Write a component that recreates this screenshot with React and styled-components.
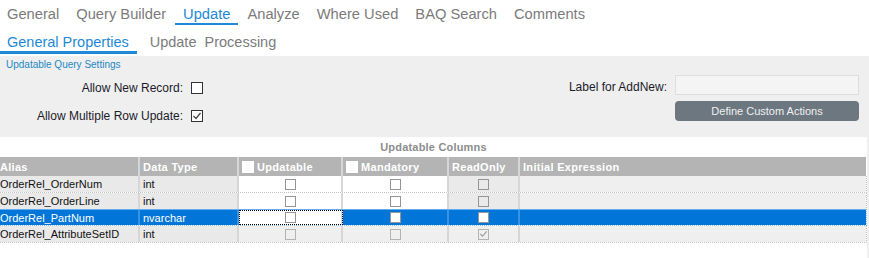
import React from 'react'
import styled, { createGlobalStyle, css } from 'styled-components'

const GlobalStyle = createGlobalStyle`
  body {
    margin: 0;
    background: #fff;
    font-family: "Liberation Sans", Arial, sans-serif;
  }
`

const Page = styled.div`
  width: 869px;
  height: 258px;
  overflow: hidden;
  background: #fff;
`

const TabBar = styled.div`
  display: flex;
  gap: 1px;
  height: 28px;
  box-sizing: border-box;
`

const Tab = styled.div`
  padding: 6px 8px 0;
  line-height: 17px;
  font-size: ${p => p.$thick ? 14.5 : 14.7}px;
  color: #7b7b7b;
  white-space: pre;
  border-bottom: ${p => p.$thick ? 3 : 2}px solid transparent;
  height: fit-content;

  &:first-child {
    padding-left: 7px;
  }

  ${p => p.$active && css`
    color: #1d89d8;
    border-bottom-color: #1d89d8;
  `}
`

const Body = styled.div`
  background: #efefef;
  height: 202px;
`

const Settings = styled.div`
  padding: 3px 10px 7px 0;
  height: 81px;
  box-sizing: border-box;
`

const SectionTitle = styled.div`
  font-size: 10px;
  line-height: 12px;
  color: #2389c4;
  padding-left: 6px;
`

const SettingsRow = styled.div`
  display: flex;
  justify-content: space-between;
`

const CheckForm = styled.div`
  display: grid;
  grid-template-columns: 183px 12px;
  grid-auto-rows: 28px;
  column-gap: 8px;
  align-items: center;
  margin-top: 3px;
`

const Label = styled.label`
  font-size: 12px;
  color: #1c1a2c;
  text-align: right;
  white-space: nowrap;
`

const Box = styled.span`
  display: inline-flex;
  align-items: center;
  justify-content: center;
  box-sizing: border-box;
  width: ${p => p.$size || 12}px;
  height: ${p => p.$size || 12}px;
  border: 1px solid ${p => p.$border || '#333'};
  background: ${p => p.$fill || 'transparent'};
`

const ActionForm = styled.div`
  display: grid;
  grid-template-columns: auto 184px;
  grid-template-rows: 20px 20px;
  column-gap: 8px;
  row-gap: 6px;
  margin-top: 4px;
`

const FieldLabel = styled(Label)`
  align-self: end;
  padding-bottom: 1px;
`

const TextInput = styled.div`
  box-sizing: border-box;
  border: 1px solid #dedede;
  background: #f4f4f4;
`

const ActionButton = styled.div`
  grid-column: 2;
  border-radius: 4px;
  background: #6c7780;
  color: #f0f0f0;
  font-size: 11px;
  display: flex;
  align-items: center;
  justify-content: center;
`

const GridPanel = styled.div`
  background: #fff;
  margin-right: 2px;
  height: 121px;
`

const GridTitle = styled.div`
  height: 20px;
  line-height: 20px;
  text-align: center;
  font-size: 11px;
  font-weight: bold;
  color: #8d8d8d;
  letter-spacing: 0.2px;
`

const COLS = '140px 99px 104px 106px 71px 1fr'

const HeadRow = styled.div`
  display: grid;
  grid-template-columns: ${COLS};
  height: 19px;
  background: #b4b4b4;
  width: 866px;
`

const HeadCell = styled.div`
  display: flex;
  align-items: center;
  gap: 3px;
  padding-left: ${p => p.$flush ? 0 : 3}px;
  border-right: 2px solid #d6d6d6;
  color: #fff;
  font-size: 11px;
  font-weight: bold;
  letter-spacing: 0.3px;
  white-space: nowrap;
  overflow: hidden;

  &:last-child {
    border-right: none;
  }
`

const DataRow = styled.div`
  display: grid;
  grid-template-columns: ${COLS};
  height: 17px;
  width: 867px;
  box-sizing: border-box;
  border-bottom: 1px dotted ${p => p.$selected ? '#8cc2ef' : '#c4c4c4'};
  border-right: 1px dotted ${p => p.$selected ? '#8cc2ef' : '#c4c4c4'};
  ${p => p.$selected && css`
    border-top: 1px solid #63aef0;
    margin-top: -1px;
  `}
`

const Cell = styled.div`
  display: flex;
  align-items: center;
  justify-content: ${p => p.$center ? 'center' : 'flex-start'};
  padding-left: ${p => p.$flush || p.$center ? 0 : 3}px;
  border-right: 2px solid #d6d6d6;
  font-size: 11px;
  color: #111;
  white-space: nowrap;
  overflow: hidden;
  background: ${p => p.$bg};
  box-sizing: border-box;

  &:last-child {
    border-right: none;
  }

  ${p => p.$selected && css`
    background: #0276d8;
    color: #fff;
    border-right-color: #3a93e0;
  `}

  ${p => p.$focused && css`
    background: #fff;
    outline: 1px dotted #000;
    outline-offset: -1px;
  `}
`

function Check({ color = '#444' }) {
  return (
    <svg width="10" height="10" viewBox="0 0 10 10">
      <polyline points="1.5,5 4,7.5 8.5,2" fill="none" stroke={color} strokeWidth="1.2" />
    </svg>
  )
}

const ROWS = [
  { alias: 'OrderRel_OrderNum', type: 'int', editable: true },
  { alias: 'OrderRel_OrderLine', type: 'int', editable: true },
  { alias: 'OrderRel_PartNum', type: 'nvarchar', editable: true, selected: true },
  { alias: 'OrderRel_AttributeSetID', type: 'int', editable: false, readOnly: true },
]

function GridRow({ row }) {
  const sel = row.selected
  const grey = '#eaeaea'
  const light = '#efefef'
  const editBg = row.editable ? '#fff' : light
  const boxBorder = row.editable ? '#959595' : '#b3b3b3'
  const selBox = sel ? '#fff' : 'transparent'
  return (
    <DataRow $selected={sel}>
      <Cell $flush $bg="#e9e9e9" $selected={sel}>{row.alias}</Cell>
      <Cell $bg="#e9e9e9" $selected={sel}>{row.type}</Cell>
      <Cell $center $bg={editBg} $focused={sel}>
        <Box $size={11} $border={boxBorder} />
      </Cell>
      <Cell $center $bg={editBg} $selected={sel}>
        <Box $size={11} $border={boxBorder} $fill={selBox} />
      </Cell>
      <Cell $center $bg={row.editable ? grey : light} $selected={sel}>
        <Box $size={11} $border={boxBorder} $fill={selBox}>
          {row.readOnly && <Check color="#9a9a9a" />}
        </Box>
      </Cell>
      <Cell $bg={light} $selected={sel} />
    </DataRow>
  )
}

export default function App() {
  const tabs = ['General', 'Query Builder', 'Update', 'Analyze', 'Where Used', 'BAQ Search', 'Comments']
  return (
    <Page>
      <GlobalStyle />
      <TabBar>
        {tabs.map(t => <Tab key={t} $active={t === 'Update'}>{t}</Tab>)}
      </TabBar>
      <TabBar>
        <Tab $thick $active>General Properties</Tab>
        <Tab $thick style={{ paddingLeft: 12 }}>{'Update  Processing'}</Tab>
      </TabBar>
      <Body>
        <Settings>
          <SectionTitle>Updatable Query Settings</SectionTitle>
          <SettingsRow>
            <CheckForm>
              <Label>Allow New Record:</Label>
              <Box $fill="#fff" />
              <Label>Allow Multiple Row Update:</Label>
              <Box $fill="#fff"><Check /></Box>
            </CheckForm>
            <ActionForm>
              <FieldLabel>Label for AddNew:</FieldLabel>
              <TextInput />
              <ActionButton>Define Custom Actions</ActionButton>
            </ActionForm>
          </SettingsRow>
        </Settings>
        <GridPanel>
          <GridTitle>Updatable Columns</GridTitle>
          <HeadRow>
            <HeadCell $flush>Alias</HeadCell>
            <HeadCell>Data Type</HeadCell>
            <HeadCell><Box $fill="#fff" $border="#fff" />Updatable</HeadCell>
            <HeadCell><Box $fill="#fff" $border="#fff" />Mandatory</HeadCell>
            <HeadCell>ReadOnly</HeadCell>
            <HeadCell>Initial Expression</HeadCell>
          </HeadRow>
          {ROWS.map(r => <GridRow key={r.alias} row={r} />)}
        </GridPanel>
      </Body>
    </Page>
  )
}
